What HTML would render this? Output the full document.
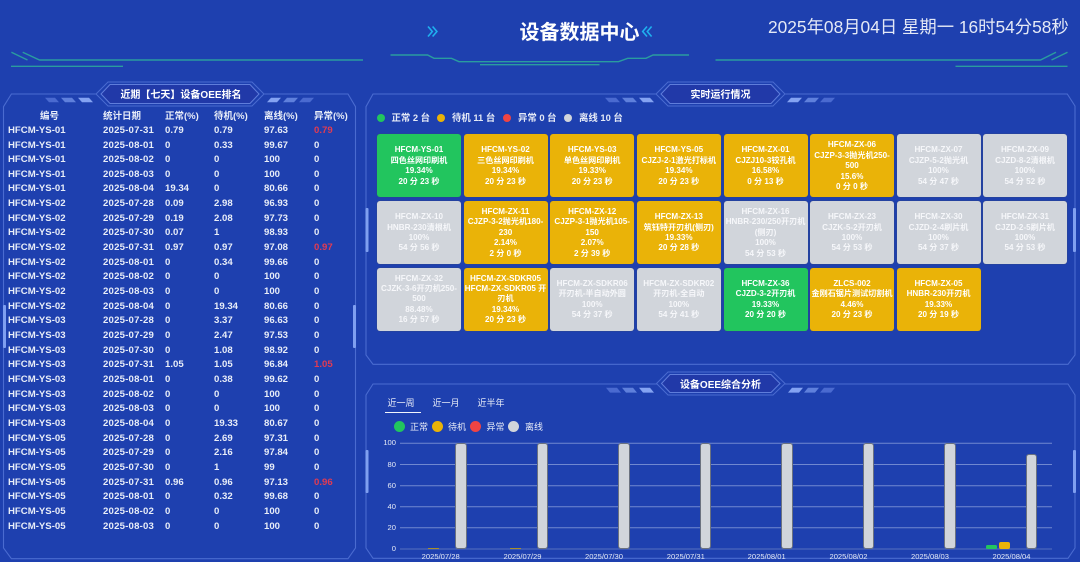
<!DOCTYPE html>
<html lang="zh">
<head>
<meta charset="utf-8">
<title>设备数据中心</title>
<style>
html,body{margin:0;padding:0;width:1080px;height:562px;overflow:hidden;background:#1e40af}
body{font-family:"Liberation Sans","Noto Sans CJK SC",sans-serif;color:#e8edf8;position:relative}
#w{position:absolute;left:0;top:0;width:1080px;height:562px;filter:blur(.35px)}
svg{position:absolute;left:0;top:0}
.a{position:absolute;white-space:nowrap}
.h{position:absolute;top:109px;font-size:9.5px;font-weight:700;line-height:12px;white-space:nowrap}
.r{position:absolute;left:0;width:355px;height:14px;font-size:9.6px;font-weight:700;line-height:14px;white-space:nowrap}
.r span{position:absolute;top:0}
.c0{left:8px}.c1{left:103px;letter-spacing:.2px}.c2{left:165px}.c3{left:214px}.c4{left:264px}.c5{left:314px}
.red{color:#e23b52}
.k{position:absolute;box-sizing:border-box;padding-top:1px;width:84px;height:63px;border-radius:3px;box-shadow:0 0 0 .5px rgba(60,70,110,.45);display:flex;flex-direction:column;justify-content:center;align-items:center;font-size:8.1px;font-weight:700;line-height:10.4px;color:#fff;text-align:center;white-space:nowrap}
.g{background:#22c55e}.y{background:#eab308}.n{background:#d1d5db;color:#f6f7fa}
.t{position:absolute;font-size:10px;font-weight:700;line-height:14px;color:#fff;white-space:nowrap;text-align:center}
.d{position:absolute;border-radius:50%}
.l{position:absolute;font-size:9.4px;font-weight:700;line-height:12px;white-space:nowrap;color:#e4e9f6}
.l2{position:absolute;font-size:9px;line-height:12px;white-space:nowrap;color:#e9edf8}
.yl{position:absolute;left:375px;width:21px;text-align:right;font-size:7.6px;line-height:10px;color:#e4e9f6}
.xl{position:absolute;top:551.5px;width:60px;text-align:center;font-size:7.6px;line-height:10px;color:#e4e9f6}
.b{position:absolute;width:11.4px;box-sizing:border-box;top:443.3px;height:105.7px;background:#d1d5db;border:.7px solid #6b7280;border-radius:3px}
</style>
</head>
<body>
<div id="w">
<svg width="1080" height="562" viewBox="0 0 1080 562" fill="none">
  <g stroke="#2a9c9f" stroke-width="1.4">
    <path d="M11.4 52.3L27.5 60M22.7 52.3L39.5 60H363M11 66.3H123"/>
    <path d="M390.5 55H427.6L434 58.3H451.5L459 61.7H618.5L627.7 58.3H646L653 55H689M480 64.7H599.5"/>
    <path d="M715.5 60H1040.5L1056 52.3M1051.5 60L1067.5 52.3M955.5 66.3H1067.5"/>
  </g>
  <g stroke="#1fb0ef" stroke-width="1.6">
    <path d="M428 26.5L432.3 31.5L428 36.5M432.6 26.5L436.9 31.5L432.6 36.5"/>
    <path d="M647 26.5L642.7 31.5L647 36.5M651.6 26.5L647.3 31.5L651.6 36.5"/>
  </g>
  <g stroke="#4a6bd0" stroke-width="1.1">
    <path d="M11.4 94H348L355.5 106.7V548L348 558.7H11.4L3.5 548V106.7Z"/>
    <path d="M373 94H1067.3L1075 106V355L1068 364.3H373L366 355V106.7Z"/>
    <path d="M373 384H1068L1075 395V548L1068 558.3H373L366 548V395Z"/>
  </g>
  <g fill="#7f9ff0">
    <rect x="3" y="305" width="3" height="43" rx="1"/><rect x="353" y="305" width="3" height="43" rx="1"/>
    <rect x="365.5" y="208" width="3" height="44" rx="1"/><rect x="1073" y="208" width="3" height="44" rx="1"/>
    <rect x="365.5" y="450" width="3" height="43" rx="1"/><rect x="1073" y="450" width="3" height="43" rx="1"/>
  </g>
  <g id="dashes">
    <path fill="#4a6ad0" d="M45 97.7H55L59 102.3H49Z"/><path fill="#5f80dc" d="M61 97.7H72L76 102.3H65Z"/><path fill="#84a3f2" d="M78 97.7H89L93 102.3H82Z"/>
    <path fill="#84a3f2" d="M271 97.7H281L277 102.3H267Z"/><path fill="#5f80dc" d="M287 97.7H298L294 102.3H283Z"/><path fill="#4a6ad0" d="M303 97.7H314L310 102.3H299Z"/>
    <path fill="#4a6ad0" d="M605 97.7H616L620 102.3H609Z"/><path fill="#5f80dc" d="M622 97.7H633L637 102.3H626Z"/><path fill="#84a3f2" d="M639 97.7H650L654 102.3H643Z"/>
    <path fill="#84a3f2" d="M791 97.7H802L798 102.3H787Z"/><path fill="#5f80dc" d="M808 97.7H819L815 102.3H804Z"/><path fill="#4a6ad0" d="M824 97.7H835L831 102.3H820Z"/>
    <path fill="#4a6ad0" d="M606 387.7H617L621 392.6H610Z"/><path fill="#5f80dc" d="M622 387.7H633L637 392.6H626Z"/><path fill="#84a3f2" d="M639 387.7H650L654 392.6H643Z"/>
    <path fill="#84a3f2" d="M792 387.7H803L799 392.6H788Z"/><path fill="#5f80dc" d="M808 387.7H819L815 392.6H804Z"/><path fill="#4a6ad0" d="M824 387.7H835L831 392.6H820Z"/>
  </g>
  <g stroke="#4a6bd0" stroke-width="1">
    <path fill="#1e40af" d="M96 94L108 82H252L264 94L252 106H108Z"/>
    <path fill="#1e40af" d="M656 94L668 82H773L785 94L773 106H668Z"/>
    <path fill="#1e40af" d="M656.5 383.5L668 372H773L785 383.5L773 395H668Z"/>
  </g>
  <g stroke="#5f7ddb" stroke-width="1" fill="#2139a8">
    <path d="M101 94L110 84.5H250L259 94L250 103.5H110Z"/>
    <path d="M661 94L670 84.5H771L780 94L771 103.5H670Z"/>
    <path d="M661.5 383.5L670 374.5H771L780 383.5L771 392.5H670Z"/>
  </g>
  <g stroke="#7088d0" stroke-width="1">
    <path d="M400 443.3H1052M400 464.5H1052M400 485.7H1052M400 506.7H1052M400 527.7H1052"/>
    <path stroke="#5570bf" d="M400 549H1052"/>
  </g>
</svg>

<div class="a" style="left:519.5px;top:20px;width:122px;font-size:20px;font-weight:700;line-height:27px;color:#fff">设备数据中心</div>
<div class="a" style="left:768px;top:16px;font-size:17.35px;line-height:22px;color:#e4e9f6">2025年08月04日 星期一 16时54分58秒</div>

<div class="t" style="left:101px;width:160px;top:88.5px">近期【七天】设备OEE排名</div>
<div class="t" style="left:661px;width:119px;top:88.5px">实时运行情况</div>
<div class="t" style="left:661px;width:119px;top:378.5px">设备OEE综合分析</div>

<div class="a" style="left:0;top:1.5px;width:360px;height:540px">
<div class="h" style="left:40px">编号</div><div class="h" style="left:103px">统计日期</div><div class="h" style="left:165px">正常(%)</div><div class="h" style="left:214px">待机(%)</div><div class="h" style="left:264px">离线(%)</div><div class="h" style="left:314px">异常(%)</div>

<div class="r" style="top:122.3px"><span class="c0">HFCM-YS-01</span><span class="c1">2025-07-31</span><span class="c2">0.79</span><span class="c3">0.79</span><span class="c4">97.63</span><span class="c5 red">0.79</span></div>
<div class="r" style="top:137px"><span class="c0">HFCM-YS-01</span><span class="c1">2025-08-01</span><span class="c2">0</span><span class="c3">0.33</span><span class="c4">99.67</span><span class="c5">0</span></div>
<div class="r" style="top:151.6px"><span class="c0">HFCM-YS-01</span><span class="c1">2025-08-02</span><span class="c2">0</span><span class="c3">0</span><span class="c4">100</span><span class="c5">0</span></div>
<div class="r" style="top:166.3px"><span class="c0">HFCM-YS-01</span><span class="c1">2025-08-03</span><span class="c2">0</span><span class="c3">0</span><span class="c4">100</span><span class="c5">0</span></div>
<div class="r" style="top:180.9px"><span class="c0">HFCM-YS-01</span><span class="c1">2025-08-04</span><span class="c2">19.34</span><span class="c3">0</span><span class="c4">80.66</span><span class="c5">0</span></div>
<div class="r" style="top:195.6px"><span class="c0">HFCM-YS-02</span><span class="c1">2025-07-28</span><span class="c2">0.09</span><span class="c3">2.98</span><span class="c4">96.93</span><span class="c5">0</span></div>
<div class="r" style="top:210.3px"><span class="c0">HFCM-YS-02</span><span class="c1">2025-07-29</span><span class="c2">0.19</span><span class="c3">2.08</span><span class="c4">97.73</span><span class="c5">0</span></div>
<div class="r" style="top:224.9px"><span class="c0">HFCM-YS-02</span><span class="c1">2025-07-30</span><span class="c2">0.07</span><span class="c3">1</span><span class="c4">98.93</span><span class="c5">0</span></div>
<div class="r" style="top:239.6px"><span class="c0">HFCM-YS-02</span><span class="c1">2025-07-31</span><span class="c2">0.97</span><span class="c3">0.97</span><span class="c4">97.08</span><span class="c5 red">0.97</span></div>
<div class="r" style="top:254.2px"><span class="c0">HFCM-YS-02</span><span class="c1">2025-08-01</span><span class="c2">0</span><span class="c3">0.34</span><span class="c4">99.66</span><span class="c5">0</span></div>
<div class="r" style="top:268.9px"><span class="c0">HFCM-YS-02</span><span class="c1">2025-08-02</span><span class="c2">0</span><span class="c3">0</span><span class="c4">100</span><span class="c5">0</span></div>
<div class="r" style="top:283.6px"><span class="c0">HFCM-YS-02</span><span class="c1">2025-08-03</span><span class="c2">0</span><span class="c3">0</span><span class="c4">100</span><span class="c5">0</span></div>
<div class="r" style="top:298.2px"><span class="c0">HFCM-YS-02</span><span class="c1">2025-08-04</span><span class="c2">0</span><span class="c3">19.34</span><span class="c4">80.66</span><span class="c5">0</span></div>
<div class="r" style="top:312.9px"><span class="c0">HFCM-YS-03</span><span class="c1">2025-07-28</span><span class="c2">0</span><span class="c3">3.37</span><span class="c4">96.63</span><span class="c5">0</span></div>
<div class="r" style="top:327.5px"><span class="c0">HFCM-YS-03</span><span class="c1">2025-07-29</span><span class="c2">0</span><span class="c3">2.47</span><span class="c4">97.53</span><span class="c5">0</span></div>
<div class="r" style="top:342.2px"><span class="c0">HFCM-YS-03</span><span class="c1">2025-07-30</span><span class="c2">0</span><span class="c3">1.08</span><span class="c4">98.92</span><span class="c5">0</span></div>
<div class="r" style="top:356.9px"><span class="c0">HFCM-YS-03</span><span class="c1">2025-07-31</span><span class="c2">1.05</span><span class="c3">1.05</span><span class="c4">96.84</span><span class="c5 red">1.05</span></div>
<div class="r" style="top:371.5px"><span class="c0">HFCM-YS-03</span><span class="c1">2025-08-01</span><span class="c2">0</span><span class="c3">0.38</span><span class="c4">99.62</span><span class="c5">0</span></div>
<div class="r" style="top:386.2px"><span class="c0">HFCM-YS-03</span><span class="c1">2025-08-02</span><span class="c2">0</span><span class="c3">0</span><span class="c4">100</span><span class="c5">0</span></div>
<div class="r" style="top:400.8px"><span class="c0">HFCM-YS-03</span><span class="c1">2025-08-03</span><span class="c2">0</span><span class="c3">0</span><span class="c4">100</span><span class="c5">0</span></div>
<div class="r" style="top:415.5px"><span class="c0">HFCM-YS-03</span><span class="c1">2025-08-04</span><span class="c2">0</span><span class="c3">19.33</span><span class="c4">80.67</span><span class="c5">0</span></div>
<div class="r" style="top:430.2px"><span class="c0">HFCM-YS-05</span><span class="c1">2025-07-28</span><span class="c2">0</span><span class="c3">2.69</span><span class="c4">97.31</span><span class="c5">0</span></div>
<div class="r" style="top:444.8px"><span class="c0">HFCM-YS-05</span><span class="c1">2025-07-29</span><span class="c2">0</span><span class="c3">2.16</span><span class="c4">97.84</span><span class="c5">0</span></div>
<div class="r" style="top:459.5px"><span class="c0">HFCM-YS-05</span><span class="c1">2025-07-30</span><span class="c2">0</span><span class="c3">1</span><span class="c4">99</span><span class="c5">0</span></div>
<div class="r" style="top:474.1px"><span class="c0">HFCM-YS-05</span><span class="c1">2025-07-31</span><span class="c2">0.96</span><span class="c3">0.96</span><span class="c4">97.13</span><span class="c5 red">0.96</span></div>
<div class="r" style="top:488.8px"><span class="c0">HFCM-YS-05</span><span class="c1">2025-08-01</span><span class="c2">0</span><span class="c3">0.32</span><span class="c4">99.68</span><span class="c5">0</span></div>
<div class="r" style="top:503.5px"><span class="c0">HFCM-YS-05</span><span class="c1">2025-08-02</span><span class="c2">0</span><span class="c3">0</span><span class="c4">100</span><span class="c5">0</span></div>
<div class="r" style="top:518.1px"><span class="c0">HFCM-YS-05</span><span class="c1">2025-08-03</span><span class="c2">0</span><span class="c3">0</span><span class="c4">100</span><span class="c5">0</span></div>
</div>

<div class="d" style="left:377px;top:114px;width:8px;height:8px;background:#22c55e"></div><div class="l" style="left:391.5px;top:112px">正常 2 台</div>
<div class="d" style="left:437px;top:114px;width:8px;height:8px;background:#eab308"></div><div class="l" style="left:452px;top:112px">待机 11 台</div>
<div class="d" style="left:502.5px;top:114px;width:8px;height:8px;background:#ef4444"></div><div class="l" style="left:518px;top:112px">异常 0 台</div>
<div class="d" style="left:564px;top:114px;width:8px;height:8px;background:#d1d5db"></div><div class="l" style="left:579px;top:112px">离线 10 台</div>

<div class="k g" style="left:377px;top:134.3px"><div>HFCM-YS-01<br>四色丝网印刷机<br>19.34%<br>20 分 23 秒</div></div>
<div class="k y" style="left:463.5px;top:134.3px"><div>HFCM-YS-02<br>三色丝网印刷机<br>19.34%<br>20 分 23 秒</div></div>
<div class="k y" style="left:550.2px;top:134.3px"><div>HFCM-YS-03<br>单色丝网印刷机<br>19.33%<br>20 分 23 秒</div></div>
<div class="k y" style="left:636.8px;top:134.3px"><div>HFCM-YS-05<br>CJZJ-2-1激光打标机<br>19.34%<br>20 分 23 秒</div></div>
<div class="k y" style="left:723.5px;top:134.3px"><div>HFCM-ZX-01<br>CJZJ10-3铰孔机<br>16.58%<br>0 分 13 秒</div></div>
<div class="k y" style="left:810px;top:134.3px"><div>HFCM-ZX-06<br>CJZP-3-3抛光机250-<br>500<br>15.6%<br>0 分 0 秒</div></div>
<div class="k n" style="left:896.5px;top:134.3px"><div>HFCM-ZX-07<br>CJZP-5-2抛光机<br>100%<br>54 分 47 秒</div></div>
<div class="k n" style="left:983px;top:134.3px"><div>HFCM-ZX-09<br>CJZD-8-2清根机<br>100%<br>54 分 52 秒</div></div>

<div class="k n" style="left:377px;top:201px"><div>HFCM-ZX-10<br>HNBR-230清根机<br>100%<br>54 分 56 秒</div></div>
<div class="k y" style="left:463.5px;top:201px"><div>HFCM-ZX-11<br>CJZP-3-2抛光机180-<br>230<br>2.14%<br>2 分 0 秒</div></div>
<div class="k y" style="left:550.2px;top:201px"><div>HFCM-ZX-12<br>CJZP-3-1抛光机105-<br>150<br>2.07%<br>2 分 39 秒</div></div>
<div class="k y" style="left:636.8px;top:201px"><div>HFCM-ZX-13<br>筑钰特开刃机(侧刃)<br>19.33%<br>20 分 28 秒</div></div>
<div class="k n" style="left:723.5px;top:201px"><div>HFCM-ZX-16<br>HNBR-230/250开刃机<br>(侧刃)<br>100%<br>54 分 53 秒</div></div>
<div class="k n" style="left:810px;top:201px"><div>HFCM-ZX-23<br>CJZK-5-2开刃机<br>100%<br>54 分 53 秒</div></div>
<div class="k n" style="left:896.5px;top:201px"><div>HFCM-ZX-30<br>CJZD-2-4刷片机<br>100%<br>54 分 37 秒</div></div>
<div class="k n" style="left:983px;top:201px"><div>HFCM-ZX-31<br>CJZD-2-5刷片机<br>100%<br>54 分 53 秒</div></div>

<div class="k n" style="left:377px;top:267.7px"><div>HFCM-ZX-32<br>CJZK-3-6开刃机250-<br>500<br>88.48%<br>16 分 57 秒</div></div>
<div class="k y" style="left:463.5px;top:267.7px"><div>HFCM-ZX-SDKR05<br>HFCM-ZX-SDKR05 开<br>刃机<br>19.34%<br>20 分 23 秒</div></div>
<div class="k n" style="left:550.2px;top:267.7px"><div>HFCM-ZX-SDKR06<br>开刃机-半自动外圆<br>100%<br>54 分 37 秒</div></div>
<div class="k n" style="left:636.8px;top:267.7px"><div>HFCM-ZX-SDKR02<br>开刃机-全自动<br>100%<br>54 分 41 秒</div></div>
<div class="k g" style="left:723.5px;top:267.7px"><div>HFCM-ZX-36<br>CJZD-3-2开刃机<br>19.33%<br>20 分 20 秒</div></div>
<div class="k y" style="left:810px;top:267.7px"><div>ZLCS-002<br>金刚石锯片测试切割机<br>4.46%<br>20 分 23 秒</div></div>
<div class="k y" style="left:896.5px;top:267.7px"><div>HFCM-ZX-05<br>HNBR-230开刃机<br>19.33%<br>20 分 19 秒</div></div>

<div class="l2" style="left:387.5px;top:397px">近一周</div>
<div class="a" style="left:385px;top:411.7px;width:36px;height:1.2px;background:#f2f5fc"></div>
<div class="l2" style="left:432.5px;top:397px">近一月</div>
<div class="l2" style="left:477.5px;top:397px">近半年</div>

<div class="d" style="left:393.5px;top:421.2px;width:11px;height:11px;background:#22c55e"></div><div class="l2" style="left:410px;top:420.5px">正常</div>
<div class="d" style="left:432px;top:421.2px;width:11px;height:11px;background:#eab308"></div><div class="l2" style="left:448px;top:420.5px">待机</div>
<div class="d" style="left:470px;top:421.2px;width:11px;height:11px;background:#ef4444"></div><div class="l2" style="left:486.5px;top:420.5px">异常</div>
<div class="d" style="left:508.2px;top:421.2px;width:11px;height:11px;background:#d1d5db"></div><div class="l2" style="left:525px;top:420.5px">离线</div>

<div class="yl" style="top:438.3px">100</div>
<div class="yl" style="top:459.5px">80</div>
<div class="yl" style="top:480.7px">60</div>
<div class="yl" style="top:501.7px">40</div>
<div class="yl" style="top:522.7px">20</div>
<div class="yl" style="top:544px">0</div>

<div class="b" style="left:455.3px"></div>
<div class="b" style="left:536.7px"></div>
<div class="b" style="left:618.3px"></div>
<div class="b" style="left:700px"></div>
<div class="b" style="left:781.3px"></div>
<div class="b" style="left:863px"></div>
<div class="b" style="left:944.3px"></div>
<div class="b" style="left:1026px;top:454.3px;height:94.7px"></div>
<div class="a" style="left:428px;top:548px;width:11.4px;height:1px;background:#a8902c"></div>
<div class="a" style="left:510px;top:548px;width:11.4px;height:1px;background:#a8902c"></div>
<div class="a" style="left:985.7px;top:545px;width:11.4px;height:4px;background:#22c55e;border-radius:1.5px"></div>
<div class="a" style="left:999px;top:541.7px;width:11.4px;height:7.3px;background:#eab308;border-radius:2px"></div>

<div class="xl" style="left:410.7px">2025/07/28</div>
<div class="xl" style="left:492.5px">2025/07/29</div>
<div class="xl" style="left:574px">2025/07/30</div>
<div class="xl" style="left:655.8px">2025/07/31</div>
<div class="xl" style="left:736.7px">2025/08/01</div>
<div class="xl" style="left:818.5px">2025/08/02</div>
<div class="xl" style="left:900px">2025/08/03</div>
<div class="xl" style="left:981.5px">2025/08/04</div>
</div>
</body>
</html>
